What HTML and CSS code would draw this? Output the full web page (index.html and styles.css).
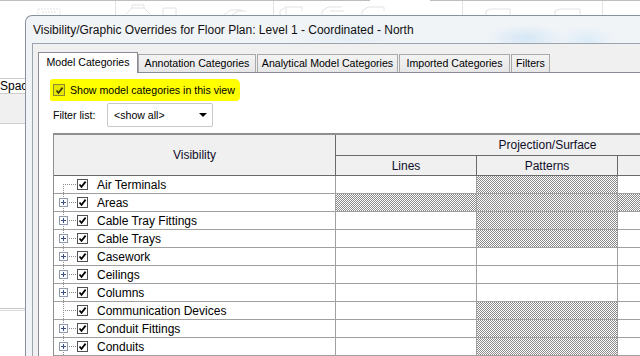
FILE: index.html
```html
<!DOCTYPE html>
<html lang="en">
<head>
    <meta charset="UTF-8">
    <meta name="viewport" content="width=device-width, initial-scale=1.0">
    <title>Visibility/Graphic Overrides</title>
    <link rel="stylesheet" href="styles.css">
</head>
<body>
    <!-- application behind the dialog -->
    <div class="app">
        <svg class="ribbon" width="640" height="15" viewBox="0 0 640 15">
            <path d="M0 0.5H370M430 0.5H640" stroke="#bdbdbd" stroke-width="1"/>
            <g stroke="#e2e2e2" fill="none">
                <path d="M115.5 1V15M273.5 1V15M462.5 1V15M602.5 1V15"/>
                <path d="M38 9H60V15M38 9V15M42 12H56" stroke-dasharray="2 1"/>
                <path d="M126 14L132 8H144L150 14M132 8V5H144V8"/>
                <path d="M163 15V8H176V15"/>
                <path d="M224 15L230 10H242M232 15L238 11H246"/>
                <path d="M280 15V11L286 7H302V11M286 7V15"/>
                <path d="M322 15V11L328 7H342M330 11H344"/>
                <path d="M362 15V11L368 7H384V11"/>
                <path d="M486 15V11L490 9H510V15"/>
                <path d="M555 15V11L560 9H580V15"/>
            </g>
        </svg>
        <div class="side">
            <div class="side-tab">Spac</div>
            <div class="side-panel"></div>
            <div class="side-body"></div>
            <div class="side-foot"></div>
        </div>
    </div>

    <div class="dialog">
        <div class="titlebar">Visibility/Graphic Overrides for Floor Plan: Level 1 - Coordinated - North</div>
        <div class="client">
            <div class="tabs">
                <div class="tab active tab-model">Model Categories</div>
                <div class="tab tab-annot">Annotation Categories</div>
                <div class="tab tab-anal">Analytical Model Categories</div>
                <div class="tab tab-imp">Imported Categories</div>
                <div class="tab tab-filt">Filters</div>
            </div>
            <div class="page">
                <div class="show">
                    <span class="cb cb-hl">
                        <svg width="9" height="9" viewBox="0 0 9 9"><path d="M1.5 4.5L3.5 6.8L7.6 1.6" stroke="#3a3a00" stroke-width="1.7" fill="none"/></svg>
                    </span>
                    <span>Show model categories in this view</span>
                </div>
                <div class="filter">
                    <span class="filter-label">Filter list:</span>
                    <div class="select">
                        <span>&lt;show all&gt;</span>
                        <span class="arrow"></span>
                    </div>
                </div>

                <div class="grid">
                    <div class="grid-head">
                        <div class="h-vis">Visibility</div>
                        <div class="h-proj">Projection/Surface</div>
                        <div class="h-sub">Lines</div>
                        <div class="h-sub">Patterns</div>
                        <div class="h-sub"></div>
                    </div>

                    <div class="row">
                        <div class="cell name"><span class="tree first"></span><span class="cb"><svg width="9" height="9" viewBox="0 0 9 9"><path d="M1.5 4.5L3.5 6.8L7.6 1.6" stroke="#000" stroke-width="1.7" fill="none"/></svg></span><span class="label">Air Terminals</span></div>
                        <div class="cell"></div>
                        <div class="cell hatch"></div>
                        <div class="cell"></div>
                    </div>
                    <div class="row">
                        <div class="cell name"><span class="tree"><span class="exp"></span></span><span class="cb"><svg width="9" height="9" viewBox="0 0 9 9"><path d="M1.5 4.5L3.5 6.8L7.6 1.6" stroke="#000" stroke-width="1.7" fill="none"/></svg></span><span class="label">Areas</span></div>
                        <div class="cell hatch"></div>
                        <div class="cell hatch"></div>
                        <div class="cell hatch"></div>
                    </div>
                    <div class="row">
                        <div class="cell name"><span class="tree"><span class="exp"></span></span><span class="cb"><svg width="9" height="9" viewBox="0 0 9 9"><path d="M1.5 4.5L3.5 6.8L7.6 1.6" stroke="#000" stroke-width="1.7" fill="none"/></svg></span><span class="label">Cable Tray Fittings</span></div>
                        <div class="cell"></div>
                        <div class="cell hatch"></div>
                        <div class="cell"></div>
                    </div>
                    <div class="row">
                        <div class="cell name"><span class="tree"><span class="exp"></span></span><span class="cb"><svg width="9" height="9" viewBox="0 0 9 9"><path d="M1.5 4.5L3.5 6.8L7.6 1.6" stroke="#000" stroke-width="1.7" fill="none"/></svg></span><span class="label">Cable Trays</span></div>
                        <div class="cell"></div>
                        <div class="cell hatch"></div>
                        <div class="cell"></div>
                    </div>
                    <div class="row">
                        <div class="cell name"><span class="tree"><span class="exp"></span></span><span class="cb"><svg width="9" height="9" viewBox="0 0 9 9"><path d="M1.5 4.5L3.5 6.8L7.6 1.6" stroke="#000" stroke-width="1.7" fill="none"/></svg></span><span class="label">Casework</span></div>
                        <div class="cell"></div>
                        <div class="cell"></div>
                        <div class="cell"></div>
                    </div>
                    <div class="row">
                        <div class="cell name"><span class="tree"><span class="exp"></span></span><span class="cb"><svg width="9" height="9" viewBox="0 0 9 9"><path d="M1.5 4.5L3.5 6.8L7.6 1.6" stroke="#000" stroke-width="1.7" fill="none"/></svg></span><span class="label">Ceilings</span></div>
                        <div class="cell"></div>
                        <div class="cell"></div>
                        <div class="cell"></div>
                    </div>
                    <div class="row">
                        <div class="cell name"><span class="tree"><span class="exp"></span></span><span class="cb"><svg width="9" height="9" viewBox="0 0 9 9"><path d="M1.5 4.5L3.5 6.8L7.6 1.6" stroke="#000" stroke-width="1.7" fill="none"/></svg></span><span class="label">Columns</span></div>
                        <div class="cell"></div>
                        <div class="cell"></div>
                        <div class="cell"></div>
                    </div>
                    <div class="row">
                        <div class="cell name"><span class="tree"></span><span class="cb"><svg width="9" height="9" viewBox="0 0 9 9"><path d="M1.5 4.5L3.5 6.8L7.6 1.6" stroke="#000" stroke-width="1.7" fill="none"/></svg></span><span class="label">Communication Devices</span></div>
                        <div class="cell"></div>
                        <div class="cell hatch"></div>
                        <div class="cell"></div>
                    </div>
                    <div class="row">
                        <div class="cell name"><span class="tree"><span class="exp"></span></span><span class="cb"><svg width="9" height="9" viewBox="0 0 9 9"><path d="M1.5 4.5L3.5 6.8L7.6 1.6" stroke="#000" stroke-width="1.7" fill="none"/></svg></span><span class="label">Conduit Fittings</span></div>
                        <div class="cell"></div>
                        <div class="cell hatch"></div>
                        <div class="cell"></div>
                    </div>
                    <div class="row">
                        <div class="cell name"><span class="tree"><span class="exp"></span></span><span class="cb"><svg width="9" height="9" viewBox="0 0 9 9"><path d="M1.5 4.5L3.5 6.8L7.6 1.6" stroke="#000" stroke-width="1.7" fill="none"/></svg></span><span class="label">Conduits</span></div>
                        <div class="cell"></div>
                        <div class="cell hatch"></div>
                        <div class="cell"></div>
                    </div>
                </div>
            </div>
        </div>
    </div>
</body>
</html>
```

FILE: styles.css
```css
* {
    margin: 0;
    padding: 0;
    box-sizing: border-box;
}

body {
    width: 640px;
    height: 356px;
    overflow: hidden;
    position: relative;
    background: #fff;
    color: #000;
    font-family: "Liberation Sans", Arial, sans-serif;
    font-size: 12px;
}

/* app behind */
.ribbon {
    display: block;
}

.side {
    width: 25px;
    margin-top: 63px;
    overflow: hidden;
}

.side-tab {
    height: 16px;
    line-height: 14px;
    border-top: 1px solid #cdcdcd;
    border-bottom: 1px solid #cdcdcd;
    font-size: 12px;
    white-space: nowrap;
}

.side-panel {
    height: 30px;
    background: #f0f0f0;
    border-bottom: 1px solid #d0d0d0;
}

.side-body {
    height: 184px;
}

.side-foot {
    height: 3px;
    border-top: 1px solid #c4c4c4;
    border-bottom: 1px solid #d8d8d8;
}

/* dialog window */
.dialog {
    position: absolute;
    left: 25px;
    top: 15px;
    width: 615px;
    height: 341px;
    border-top: 1px solid #8692a0;
    border-left: 1px solid #8692a0;
    border-radius: 7px 0 0 0;
    padding-left: 6px;
    overflow: hidden;
    background:
        radial-gradient(ellipse 40px 14px at 500px 22px, rgba(190, 220, 245, 0.55), transparent),
        radial-gradient(ellipse 30px 14px at 560px 24px, rgba(200, 228, 248, 0.5), transparent),
        radial-gradient(ellipse 60px 14px at 320px 20px, rgba(205, 228, 245, 0.4), transparent),
        #f1f4f7;
}

.titlebar {
    height: 27px;
    line-height: 29px;
    padding-left: 1px;
    font-size: 12px;
    white-space: nowrap;
    color: #111;
}

.client {
    height: 313px;
    border-top: 1px solid #9aa5b0;
    border-left: 1px solid #9aa5b0;
    background: #f0f0f0;
    padding: 8px 0 0 5px;
    overflow: hidden;
}

.tabs {
    display: flex;
    align-items: flex-end;
    height: 20px;
}

.tab {
    height: 18px;
    line-height: 17px;
    text-align: center;
    font-size: 10.6px;
    white-space: nowrap;
    border: 1px solid #a9a9a9;
    border-bottom: none;
    background: linear-gradient(#f4f4f4, #e6e6e6);
    margin-left: 1px;
    flex-shrink: 0;
}

.tab.active {
    height: 21px;
    line-height: 18px;
    margin-left: 0;
    margin-bottom: -1px;
    background: #fff;
    border-color: #898c95;
    position: relative;
    z-index: 1;
}

.tab-model { width: 100px; }
.tab-annot { width: 118px; margin-left: 0; }
.tab-anal { width: 141px; }
.tab-imp { width: 111px; }
.tab-filt { width: 39px; }

.page {
    height: 284px;
    background: #fff;
    border-top: 1px solid #898c95;
    border-left: 1px solid #898c95;
    padding-left: 14px;
    overflow: hidden;
    font-size: 10.6px;
}

.show {
    display: inline-flex;
    align-items: center;
    gap: 5px;
    height: 22px;
    margin: 6px 0 0 -3px;
    padding: 0 5px 0 3px;
    background: #ffff00;
    border-radius: 3px 5px 4px 2px;
    font-size: 10.6px;
}

.cb {
    display: inline-flex;
    align-items: center;
    justify-content: center;
    width: 11px;
    height: 11px;
    border: 1px solid #505050;
    background: #fff;
    flex-shrink: 0;
}

.cb-hl {
    width: 12px;
    height: 12px;
    border-color: #8a8a30;
    background: #e6e600;
}

.filter {
    display: flex;
    align-items: center;
    height: 24px;
    margin-top: 2px;
}

.filter-label {
    width: 54px;
}

.select {
    display: flex;
    align-items: center;
    justify-content: space-between;
    width: 106px;
    height: 24px;
    border: 1px solid #c6c8cc;
    border-radius: 2px;
    padding: 0 5px 0 6px;
}

.arrow {
    width: 0;
    height: 0;
    border-left: 4px solid transparent;
    border-right: 4px solid transparent;
    border-top: 4px solid #000;
}

/* visibility grid */
.grid {
    margin-top: 6px;
    width: 706px;
    border-left: 1px solid #8e8e8e;
    font-size: 12px;
}

.grid-head {
    display: grid;
    grid-template-columns: 282px 141px 141px 141px;
    grid-template-rows: 21px 20px;
    border-top: 2px solid #8e8e8e;
    background: #f0f0f0;
    color: #0f0f2a;
}

.grid-head > div {
    display: flex;
    align-items: center;
    justify-content: center;
    border-bottom: 1px solid #6a6a6a;
}

.h-vis {
    grid-row: 1 / 3;
    border-right: 1px solid #6a6a6a;
}

.h-proj {
    grid-column: 2 / 5;
}

.h-sub {
    border-right: 1px solid #6a6a6a;
}

.row {
    display: grid;
    grid-template-columns: 282px 141px 141px 141px;
    height: 18px;
}

.cell {
    border-right: 1px solid #a0a0a0;
    border-bottom: 1px solid #a0a0a0;
}

.hatch {
    background: repeating-conic-gradient(#8a8a8a 0 25%, #fff 0 50%) 0 0 / 2px 2px;
}

.name {
    display: flex;
    align-items: center;
    white-space: nowrap;
}

.tree {
    display: flex;
    align-items: center;
    width: 23px;
    height: 100%;
    background-image:
        repeating-linear-gradient(to bottom, #8c8c8c 0 1px, transparent 1px 2px),
        repeating-linear-gradient(to right, #8c8c8c 0 1px, transparent 1px 2px);
    background-size: 1px 100%, 13px 1px;
    background-position: 9px 0, 9px 8px;
    background-repeat: no-repeat;
}

.tree.first {
    background-size: 1px 9px, 13px 1px;
    background-position: 9px 8px, 9px 8px;
}

.exp {
    width: 9px;
    height: 9px;
    margin-left: 5px;
    border: 1px solid #8f9aae;
    background-color: #fff;
    background-image:
        linear-gradient(#3c4f86, #3c4f86),
        linear-gradient(#3c4f86, #3c4f86);
    background-size: 5px 1px, 1px 5px;
    background-position: center, center;
    background-repeat: no-repeat;
}

.label {
    margin-left: 9px;
}
```
